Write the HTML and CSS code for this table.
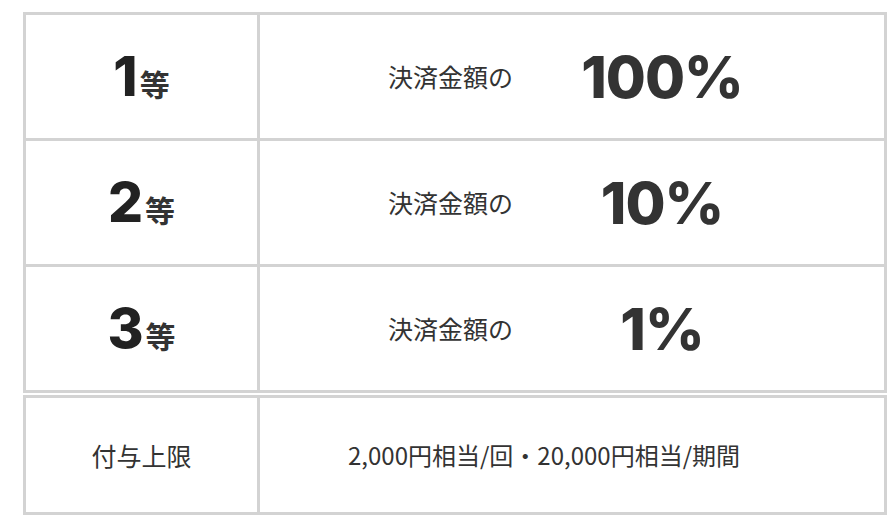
FILE: index.html
```html
<!DOCTYPE html>
<html lang="ja">
<head>
<meta charset="utf-8">
<link rel="stylesheet" href="styles.css">
</head>
<body>
<div class="tbl">
  <div class="row prize">
    <div class="c1"><span class="num">1</span><span class="tou">等</span></div>
    <div class="c2"><span class="lbl">決済金額の</span><span class="pct">100%</span></div>
  </div>
  <div class="row prize">
    <div class="c1"><span class="num">2</span><span class="tou">等</span></div>
    <div class="c2"><span class="lbl">決済金額の</span><span class="pct">10%</span></div>
  </div>
  <div class="row prize">
    <div class="c1"><span class="num">3</span><span class="tou">等</span></div>
    <div class="c2"><span class="lbl">決済金額の</span><span class="pct">1%</span></div>
  </div>
</div>
<div class="tbl second">
  <div class="row limit">
    <div class="c1"><span class="txt">付与上限</span></div>
    <div class="c2 wide"><span class="txt">2,000円相当/回・20,000円相当/期間</span></div>
  </div>
</div>
</body>
</html>
```
FILE: styles.css
```css
html, body {
  margin: 0;
  padding: 0;
  background: #fff;
}
body {
  padding: 12px 0 0 23px;
  font-family: "Noto Sans CJK JP", "Noto Sans", sans-serif;
  color: #333;
}
.tbl {
  width: 864px;
  box-sizing: border-box;
  border: 3px solid #d3d3d3;
}
.second {
  margin-top: 2px;
}
.row {
  display: grid;
  grid-template-columns: 234px 1fr;
}
.row + .row {
  border-top: 3px solid #d3d3d3;
}
.prize {
  height: 123px;
}
.limit {
  height: 114px;
}
.c1 {
  border-right: 3px solid #d3d3d3;
  display: flex;
  align-items: center;
  justify-content: center;
}
.c2 {
  display: flex;
  align-items: center;
  padding-left: 128px;
}
.c2.wide {
  padding-left: 88px;
}
.num {
  font-family: "Inter", sans-serif;
  font-weight: 800;
  font-size: 55px;
  line-height: 1;
  color: #222;
  letter-spacing: -1px;
}
.tou {
  font-weight: 700;
  font-size: 30px;
  line-height: 1;
  color: #333;
  margin-left: 3px;
  margin-top: 12px;
}
.lbl {
  font-size: 25px;
  line-height: 1;
  color: #333;
}
.pct {
  width: 184px;
  margin-left: 57px;
  text-align: center;
  font-family: "Inter", sans-serif;
  font-weight: 800;
  font-size: 58px;
  line-height: 1;
  color: #333;
  letter-spacing: -1px;
}
.txt {
  font-size: 24px;
  line-height: 1;
  color: #333;
}
.c1 .txt {
  font-size: 25px;
}
```
